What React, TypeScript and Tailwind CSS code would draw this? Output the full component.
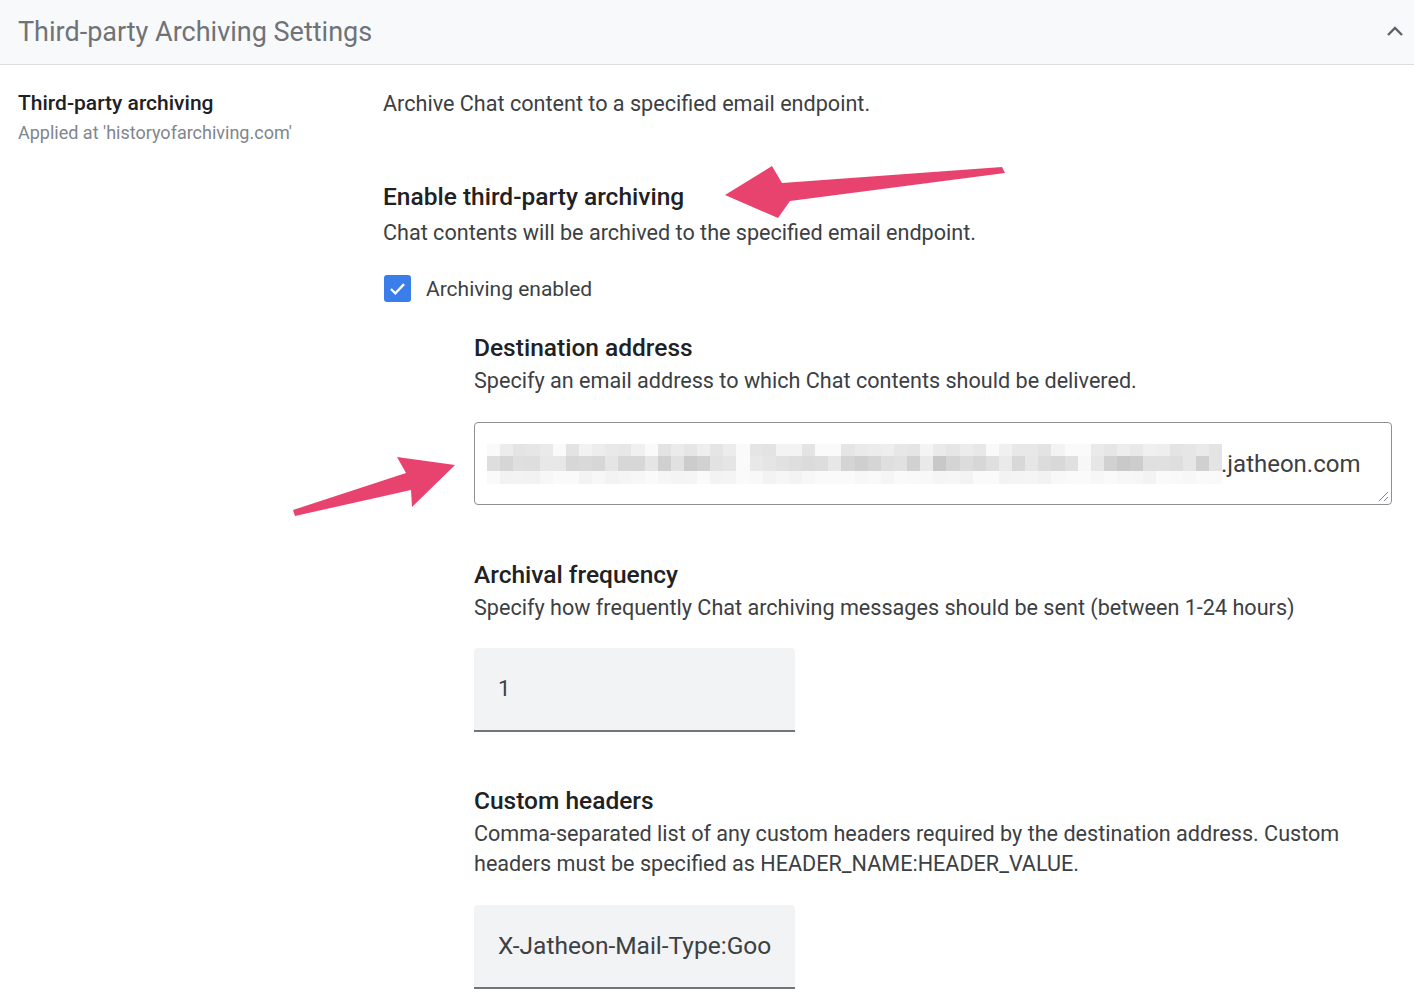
import React from "react";

function BlurBlocks() {
  const cols = 56;
  const rows = [
    { h: 12, base: 226, spread: 18 },
    { h: 15, base: 200, spread: 34 },
    { h: 13, base: 242, spread: 10 },
  ];
  const gaps = new Set([0, 5, 12, 19, 25, 26, 38, 44, 45]);
  let seed = 7;
  const rnd = () => {
    seed = (seed * 9301 + 49297) % 233280;
    return seed / 233280;
  };
  return (
    <div className="flex flex-col w-[735px]">
      {rows.map((r, ri) => (
        <div key={ri} className="flex" style={{ height: r.h }}>
          {Array.from({ length: cols }).map((_, ci) => {
            let v = Math.round(r.base + rnd() * r.spread);
            if (gaps.has(ci)) v = Math.min(250, v + 20);
            v = Math.min(250, v);
            return (
              <div
                key={ci}
                className="flex-1"
                style={{ background: `rgb(${v},${v},${v})` }}
              />
            );
          })}
        </div>
      ))}
    </div>
  );
}

export default function App() {
  return (
    <div
      className="relative w-[1414px] h-[1000px] bg-white overflow-hidden text-[#3c4043]"
      style={{ fontFamily: "Roboto, 'Liberation Sans', sans-serif" }}
    >
      {/* Header */}
      <div className="h-[65px] bg-[#f8f9fa] border-b border-[#dadce0] flex items-center justify-between pl-[18px] pr-[9px]">
        <div className="text-[27px] text-[#6f7378] leading-[32px]">
          Third-party Archiving Settings
        </div>
        <svg width="20" height="20" viewBox="0 0 20 20" className="-mt-[1px]">
          <path d="M3 13 L10 6 L17 13" fill="none" stroke="#5f6368" strokeWidth="2.4" />
        </svg>
      </div>

      {/* Body */}
      <div className="flex pl-[18px]">
        <div className="w-[365px] pt-[26px] shrink-0">
          <div className="text-[21px] leading-[24px] font-medium text-[#202124]">
            Third-party archiving
          </div>
          <div className="text-[18px] leading-[24px] text-[#80868b] mt-[6px]">
            Applied at 'historyofarchiving.com'
          </div>
        </div>

        <div className="flex-1 pt-[25px]">
          <div className="text-[21.6px] leading-[28px]">
            Archive Chat content to a specified email endpoint.
          </div>

          <div className="mt-[64px] text-[24.5px] leading-[30px] font-medium text-[#202124]">
            Enable third-party archiving
          </div>
          <div className="mt-[7px] text-[21.6px] leading-[28px]">
            Chat contents will be archived to the specified email endpoint.
          </div>

          <div className="mt-[28px] flex items-center h-[27px] pl-[1px]">
            <div className="w-[27px] h-[27px] rounded-[3px] bg-[#3b7de9] flex items-center justify-center">
              <svg width="21" height="21" viewBox="0 0 24 24">
                <path d="M4.5 12.5 L9.5 17.5 L19.5 7" fill="none" stroke="white" strokeWidth="2.6" />
              </svg>
            </div>
            <div className="ml-[15px] text-[21px] leading-[28px]">Archiving enabled</div>
          </div>

          <div className="pl-[91px]">
            <div className="mt-[31px] text-[24.5px] leading-[30px] font-medium text-[#202124]">
              Destination address
            </div>
            <div className="mt-[4px] text-[21.6px] leading-[28px]">
              Specify an email address to which Chat contents should be delivered.
            </div>

            <div className="relative mt-[27px] w-[918px] h-[83px] border border-[#8c9095] rounded-[4px] flex items-center pl-[12px]">
              <BlurBlocks />
              <div className="text-[24px] leading-[30px] text-[#3c4043] -ml-[1px]">.jatheon.com</div>
              <svg width="12" height="12" viewBox="0 0 12 12" className="absolute right-[2px] bottom-[2px]">
                <path d="M11 2 L2 11 M11 7 L7 11" stroke="#80868b" strokeWidth="1" fill="none" />
              </svg>
            </div>

            <div className="mt-[55px] text-[24.5px] leading-[30px] font-medium text-[#202124]">
              Archival frequency
            </div>
            <div className="mt-[4px] text-[21.6px] leading-[28px]">
              Specify how frequently Chat archiving messages should be sent (between 1-24 hours)
            </div>

            <div className="mt-[26px] w-[321px] h-[84px] bg-[#f1f3f4] rounded-t-[4px] border-b-2 border-[#70757a] flex items-center pl-[24px]">
              <div className="text-[22px] leading-[28px] text-[#3c4043]">1</div>
            </div>

            <div className="mt-[54px] text-[24.5px] leading-[30px] font-medium text-[#202124]">
              Custom headers
            </div>
            <div className="mt-[3px] text-[21.6px] leading-[30px] w-[920px]">
              Comma-separated list of any custom headers required by the destination address. Custom
              <br />
              headers must be specified as HEADER_NAME:HEADER_VALUE.
            </div>

            <div className="mt-[26px] w-[321px] h-[84px] bg-[#f1f3f4] rounded-t-[4px] border-b-2 border-[#70757a] flex items-center pl-[24px] pr-[24px]">
              <div className="text-[24.5px] leading-[28px] text-[#3c4043] whitespace-nowrap overflow-hidden">
                X-Jatheon-Mail-Type:Google
              </div>
            </div>
          </div>
        </div>
      </div>

      {/* Annotation arrows */}
      <svg className="absolute left-0 top-0 pointer-events-none" width="1414" height="1000">
        <polygon
          points="725,195 772,166 782,183 1002,167 1005,173 790,201 778,218"
          fill="#e8436f"
        />
        <polygon
          points="455,465 397,457 406,473 293,510 295,516 411,490 412,507"
          fill="#e8436f"
        />
      </svg>
    </div>
  );
}
